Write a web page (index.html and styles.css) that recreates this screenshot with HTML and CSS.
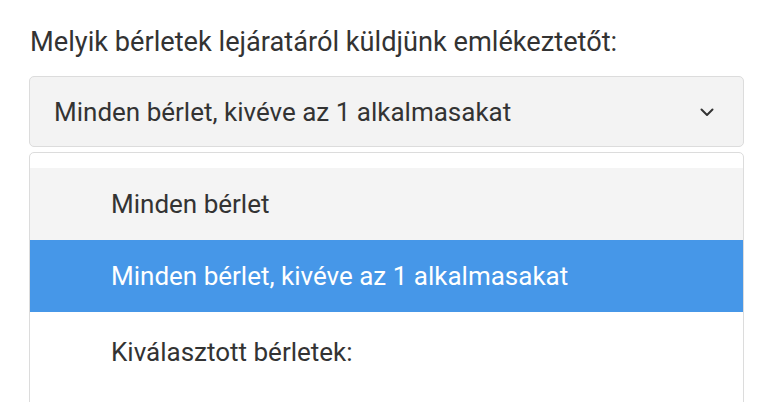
FILE: index.html
```html
<!DOCTYPE html>
<html lang="hu">
<head>
    <meta charset="UTF-8">
    <meta name="viewport" content="width=device-width, initial-scale=1.0">
    <title>Emlékeztető beállítás</title>
    <link rel="stylesheet" href="styles.css">
</head>
<body>

<div class="field">
    <label class="field-label">Melyik bérletek lejáratáról küldjünk emlékeztetőt:</label>

    <div class="select">
        <span class="select-value">Minden bérlet, kivéve az 1 alkalmasakat</span>
        <svg class="chevron" width="14" height="9" viewBox="0 0 14 9">
            <path d="M1.5 1.5 L7 7 L12.5 1.5" fill="none" stroke="#333" stroke-width="2" stroke-linecap="round" stroke-linejoin="round"/>
        </svg>
    </div>

    <ul class="dropdown">
        <li class="option hover">Minden bérlet</li>
        <li class="option selected">Minden bérlet, kivéve az 1 alkalmasakat</li>
        <li class="option last">Kiválasztott bérletek:</li>
    </ul>
</div>

</body>
</html>
```

FILE: styles.css
```css
body {
    font-family: Roboto, 'Liberation Sans', sans-serif;
    background-color: #fff;
    color: #333;
    margin: 0;
}
.field {
    padding: 27px 22px 0 29px;
}
.field-label {
    display: block;
    font-size: 27.2px;
    line-height: 30px;
    margin: 0 0 19px 1px;
}
.select {
    display: flex;
    align-items: center;
    justify-content: space-between;
    height: 69px;
    padding: 0 29px 0 24px;
    background: #f3f3f3;
    border: 1px solid #dcdcdc;
    border-radius: 5px;
    font-size: 26px;
}
.chevron {
    margin-top: 2px;
}
.dropdown {
    list-style: none;
    margin: 5px 0 0;
    padding: 15px 0 20px;
    border: 1px solid #dcdcdc;
    border-radius: 5px;
    background: #fff;
}
.option {
    display: flex;
    align-items: center;
    height: 72px;
    padding-left: 81px;
    font-size: 26px;
}
.option.hover {
    background: #f4f4f4;
}
.option.selected {
    background: #4697e8;
    color: #fff;
}
.option.last {
    padding-top: 4px;
}
```
